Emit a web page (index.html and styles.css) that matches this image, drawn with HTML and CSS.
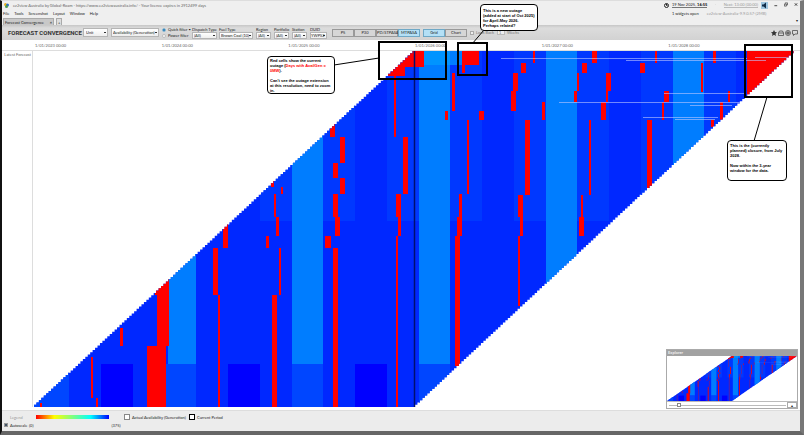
FILE: index.html
```html
<!DOCTYPE html>
<html lang="en">
<head>
<meta charset="utf-8">
<title>Forecast Convergence</title>
<link rel="stylesheet" href="styles.css">
</head>
<body>
<div class="window">
  <header class="head">
    <div class="titles">
      <div class="titlebar">
        <svg class="logo" viewBox="0 0 10 10"><circle cx="3" cy="3" r="3" fill="#e8b020"/><circle cx="7" cy="4" r="3" fill="#2b6fc4"/><circle cx="5" cy="7" r="3" fill="#4a9a50"/></svg>
        <span>ez2view Australia by Global-Roam - https://www.ez2viewaustralia.info/ - Your licence expires in 2912499 days</span>
      </div>
      <nav class="menu"><a href="#">File</a><a href="#">Tools</a><a href="#">Screenshot</a><a href="#">Layout</a><a href="#">Window</a><a href="#">Help</a></nav>
    </div>
    <div class="status">
      <svg class="clock" viewBox="0 0 10 10" fill="none" stroke="#222" stroke-width="2"><circle cx="5" cy="5" r="4"/><path d="M5 2v3h2"/></svg>
      <div class="status-text">
        <div class="status-row"><span class="now">19 Nov 2025, <b>16:55</b></span><svg class="pin" viewBox="0 0 6 10"><path d="M1 1h4v3H1zM2 4h1v5" fill="#333"/></svg><span class="next">Next: 13:00 (00:00)</span></div>
        <div class="status-row"><span>1 widgets open</span><span class="faint">ez2view-Australia-9.9.0.57-(2MB)</span></div>
      </div>
      <div class="wincontrols">
        <button aria-label="Sound" class="sound"><svg viewBox="0 0 14 14"><path d="M0 0h14v14H0z" fill="#9dc5df"/><path d="M2 5h3l5-4v12L5 9H2z" fill="#102c48"/></svg></button>
        <button aria-label="Minimise"><svg viewBox="0 0 10 10"><path d="M1 8h7" stroke="#222" stroke-width="2"/></svg></button>
        <button aria-label="Restore"><svg viewBox="0 0 10 10" fill="none" stroke="#222" stroke-width="1.5"><path d="M1 4h5v5H1zM3 3V1h6v5H7"/></svg></button>
        <button aria-label="Close"><svg viewBox="0 0 10 10"><path d="M2 2l6 6M8 2l-6 6" stroke="#222" stroke-width="2"/></svg></button>
      </div>
    </div>
  </header>
  <div class="tabs"><button class="tab active"><span>Forecast Convergence</span><b>×</b></button><button class="tab">+</button><span class="tabs-more">▾</span></div>
  <div class="toolbar">
    <h1>FORECAST CONVERGENCE</h1>
    <select class="big unit" aria-label="Level"><option>Unit</option></select>
    <select class="big measure" aria-label="Measure"><option>Availability (Generation)</option></select>
    <div class="radios">
      <label><input type="radio" name="filter" checked>Quick filter •</label>
      <label><input type="radio" name="filter">Power filter</label>
    </div>
    <div class="filters">
      <label class="field dispatch">Dispatch Type<select><option>(All)</option></select></label>
      <label class="field fuel">Fuel Type<select><option>Brown Coal (10)</option></select></label>
      <label class="field">Region<select><option>(All)</option></select></label>
      <label class="field">Portfolio<select><option>(All)</option></select></label>
      <label class="field">Station<select><option>(All)</option></select></label>
      <label class="field duid">DUID<select><option>YWPS2</option></select></label>
    </div>
    <div class="segments"><button>P5</button><button>P30</button><button>PD/STPASA</button><button class="on">MTPASA</button></div>
    <div class="segments"><button class="on">Grid</button><button>Chart</button></div>
    <label class="lookback"><input type="checkbox">Look Back</label>
    <label class="lookback"><input type="text" value="1" class="weeks">Weeks</label>
    <div class="tools">
      <button aria-label="Favourite"><svg viewBox="0 0 12 12"><path d="M6 0l2 4 4 .5-3 3L10 12 6 9.500 2 12l1-4.500-3-3L4 4z"/></svg></button>
      <button aria-label="Copy"><svg viewBox="0 0 12 12" fill="none" stroke="#444" stroke-width="1.500"><path d="M1 11V6l2-4h6l2 4v5zM1 6h10"/></svg></button>
      <button aria-label="Print"><svg viewBox="0 0 12 12" fill="none" stroke="#444" stroke-width="1.500"><circle cx="6" cy="6" r="5"/><path d="M3 6h6M4 4h4v4H4z"/></svg></button>
      <button aria-label="Comment"><svg viewBox="0 0 12 12" fill="none" stroke="#444" stroke-width="1.500"><path d="M1 1h10v7H6l-3 3V8H1z"/></svg></button>
    </div>
  </div>
  <main class="chart">
    <div class="axis"><span>1/01/2023 00:00</span><span>1/01/2024 00:00</span><span>1/01/2025 00:00</span><span>1/01/2026 00:00</span><span>1/01/2027 00:00</span><span>1/01/2028 00:00</span></div>
    <div class="plot">
      <div class="ylabel">Latest Forecast</div>
      <svg class="heat" viewBox="33 51 762 356" preserveAspectRatio="none" role="img" aria-label="Availability by forecast and period">
        <defs><clipPath id="band"><polygon id="stairs"/></clipPath></defs>
        <g id="cells" clip-path="url(#band)"></g>
      </svg>
    </div>
    <section class="explorer">
      <h2>Explorer</h2>
      <svg class="mini" viewBox="33 51 762 356" preserveAspectRatio="none"><use href="#cells"/></svg>
      <div class="zoombar"><input type="range" min="0" max="100" value="7" aria-label="Zoom"><button aria-label="Collapse">▴</button></div>
    </section>
  </main>
  <footer class="legend">
    <div class="legend-row"><span class="legend-title">Legend</span><i class="ramp"></i><span class="key"><i class="box"></i>Actual Availability (Generation)</span><span class="key"><i class="box dark"></i>Current Period</span></div>
    <div class="legend-row scale"><label><input type="checkbox" checked>Autoscale</label><span class="low">(0)</span><span class="high">(375)</span></div>
  </footer>
  <svg class="marks" viewBox="0 0 804 435" preserveAspectRatio="none" fill="none" stroke="#000">
    <path d="M414.500 51V407" stroke="#001070" stroke-width="1.500"/>
    <path d="M334 65L379 58M472 44L484 30M767 97L754 141"/>
    <path d="M379 42h67v37h-67zM458 43h29v32h-29zM745 45h47v52h-47z" stroke-width="2"/>
  </svg>
  <aside class="callout current">Red cells show the current<br>outage (<em>Days with AvailGen =<br>0MW</em>).<br><br>Can't see the outage extension<br>at this resolution, need to zoom<br>in.</aside>
  <aside class="callout fresh">This is a new outage<br>(added at start of Oct 2025)<br>for April-May 2026.<br>Perhaps related?</aside>
  <aside class="callout closure">This is the (currently<br>planned) closure, from July<br>2028.<br><br>Now within the 3-year<br>window for the data.</aside>
</div>
<script src="heatmap.js"></script>
</body>
</html>
```
FILE: styles.css
```css
* { box-sizing: border-box; }
body { margin: 0; background: #fff; font: 4px/5px Lato, "Noto Sans", sans-serif; color: #222; }
button, select, input { font: inherit; color: inherit; margin: 0; padding: 0; }
button { border: 0; background: none; }
svg { display: block; }
a { color: inherit; text-decoration: none; }

.window { position: relative; min-height: 100vh; display: flex; flex-direction: column; border: solid; border-width: 1px 4px 4px 2px; border-color: #ddd #777 #666 #111; background: #fff; }
.head { display: flex; justify-content: space-between; height: 17px; background: #efefef; }
.titlebar { display: flex; align-items: center; gap: 4px; height: 9px; padding-left: 2px; color: #666; }
.logo { width: 5px; height: 5px; }
.menu { display: flex; gap: 5px; padding: 1px 1px; }
.status { display: flex; gap: 3px; padding: 1px 2px; }
.clock { width: 5px; height: 5px; margin-top: 1px; }
.status-text { width: 86px; white-space: nowrap; }
.status-row { display: flex; gap: 8px; height: 9px; }
.now { border-bottom: 1px solid #777; height: 6px; }
.now b { color: #000; }
.pin { width: 3px; height: 5px; }
.next { color: #999; border-bottom: 1px solid #bbb; height: 6px; }
.faint { color: #999; }
.wincontrols { display: flex; align-items: flex-start; gap: 6px; }
.wincontrols svg { width: 4px; height: 5px; }
.wincontrols .sound svg { width: 7px; height: 7px; }

.tabs { display: flex; gap: 2px; height: 7px; padding-left: 1px; background: #efefef; }
.tab { display: flex; justify-content: space-between; align-items: center; padding: 0 1px; border: 1px solid #aaa; border-bottom: 0; background: #ddd; }
.tab.active { width: 51px; background: #c8c8c8; }
.tabs-more { margin-left: auto; padding-right: 2px; }

.toolbar { display: flex; align-items: center; gap: 3px; height: 15px; padding: 0 2px 0 6px; background: linear-gradient(#c6c6c6, #dcdcdc 20%, #d2d2d2); white-space: nowrap; }
h1 { margin: 0; width: 72px; font: bold 6px/8px Roboto, "Noto Sans", sans-serif; color: #333; }
select { appearance: none; height: 7px; padding-left: 2px; border: 1px solid #b5b5b5; border-radius: 0; background: linear-gradient(#333, #333) right 1px center / 2px 1px no-repeat, linear-gradient(#fff, #eee); }
.big { height: 9px; }
.unit { width: 25px; }
.measure { width: 48px; padding-left: 1px; }
.radios { display: grid; gap: 1px; width: 27px; }
.radios label { display: flex; align-items: center; gap: 2px; }
.radios input { appearance: none; width: 4px; height: 4px; border: 1px solid #bbb; border-radius: 50%; background: #fff; }
.radios input:checked { background: #1878b8; border-color: #90b8d0; }
.filters { display: flex; gap: 3px; }
.field { display: grid; width: 15px; }
.field select { width: 100%; padding-left: 1px; }
.field.dispatch { width: 24px; }
.field.fuel { width: 34px; }
.field.duid { width: 17px; }
.duid select { padding-left: 0; }
.segments { display: flex; }
.segments button { width: 22px; height: 8px; border: 1px solid #999; background: #d6d6d6; }
.segments .on { background: #b4e0f6; border-color: #6fa8c6; }
.filters + .segments { margin-left: 2px; }
.lookback { display: flex; align-items: center; gap: 2px; color: #777; }
.lookback [type=checkbox] { appearance: none; width: 4px; height: 4px; border: 1px solid #aaa; background: #eee; }
.weeks { width: 8px; height: 5px; padding-left: 1px; border: 1px solid #bbb; background: #eee; }
.tools { display: flex; gap: 1px; margin-left: auto; }
.tools svg { width: 6px; height: 6px; fill: none; }
.tools button:first-child svg { fill: #333; }

.chart { position: relative; flex: 1; display: flex; flex-direction: column; padding-bottom: 3px; }
.axis { display: grid; grid-template-columns: repeat(6, 1fr); height: 11px; padding: 3px 5px 0 33px; border-bottom: 1px solid #ddd; color: #666; }
.plot { flex: 1; display: flex; padding-right: 5px; }
.ylabel { width: 31px; flex: none; padding: 1px 1px 0 0; text-align: right; border-right: 1px solid #ddd; color: #666; white-space: nowrap; }
.heat { flex: 1; width: 100%; min-width: 0; height: auto; }

.explorer { position: absolute; right: 2px; bottom: 1px; width: 132px; border: 1px solid #aaa; background: #fff; }
h2 { margin: 0; padding-left: 1px; font: bold 4px/6px Lato, "Noto Sans", sans-serif; color: #eee; background: #a2a2a2; }
.mini { width: 100%; height: 45px; }
.zoombar { display: flex; align-items: center; gap: 1px; height: 7px; border-top: 1px solid #bbb; }
.zoombar input { appearance: none; flex: 1; min-width: 0; height: 6px; margin-left: 2px; background: linear-gradient(#bbb, #bbb) center / 100% 1px no-repeat; }
.zoombar input::-webkit-slider-thumb { appearance: none; width: 4px; height: 4px; border: 1px solid #888; background: #fff; }
.zoombar button { width: 10px; height: 6px; border: 1px solid #aaa; }

.legend { height: 21px; padding-top: 2px; border-top: 1px solid #ddd; background: #ececec; }
.legend-row { display: flex; align-items: center; height: 8px; padding-left: 8px; }
.legend-title { width: 26px; color: #999; }
.ramp { width: 73px; height: 4px; margin-right: 15px; background: linear-gradient(90deg, #f00, #ff0 25%, #7fff7f 50%, #0ff 75%, #00f); }
.key { display: flex; align-items: center; gap: 2px; width: 65px; white-space: nowrap; }
.box { width: 6px; height: 6px; border: 1px solid #888; background: #fff; }
.box.dark { border-color: #000; }
.scale { padding-left: 2px; }
.scale label { display: flex; align-items: center; gap: 2px; width: 25px; }
.scale input { appearance: none; width: 4px; height: 4px; border: 1px solid #999; background: #456; }
.high { margin-left: 78px; }

.marks { position: absolute; top: -1px; left: -2px; width: calc(100% + 6px); height: calc(100% + 5px); pointer-events: none; }
.callout { position: absolute; border: 1px solid #000; border-radius: 4px; padding: 1px 2px; background: #fff; color: #000; font: bold 4px/5px "Liberation Sans", "Noto Sans", sans-serif; white-space: nowrap; }
.callout em { font-style: normal; color: #f00; }
.current { left: 265px; top: 55px; width: 68px; height: 38px; }
.fresh { left: 478px; top: 3px; width: 58px; height: 27px; padding-top: 3px; }
.closure { left: 725px; top: 139px; width: 60px; height: 41px; padding-top: 2px; }
```
FILE: heatmap.js
```js
const LEFT = 33, TOP = 51, SPAN = 381, HEIGHT = 356, WEEKS = 156;
const cells = document.getElementById('cells');

function rect(x, y, w, h, fill) {
  const r = document.createElementNS('http://www.w3.org/2000/svg', 'rect');
  Object.entries({ x, y, width: w, height: h, fill }).forEach(([k, v]) => r.setAttribute(k, v));
  cells.appendChild(r);
}

// Each older forecast starts one week earlier, which steps both edges.
const left = [], right = [];
for (let i = 0; i < WEEKS; i++) {
  const x = LEFT + SPAN - (i + 1) * SPAN / WEEKS + 1;
  const y1 = TOP + i * HEIGHT / WEEKS, y2 = TOP + (i + 1) * HEIGHT / WEEKS;
  left.push(`${x},${y1}`, `${x},${y2}`);
  right.push(`${x + SPAN},${y1}`, `${x + SPAN},${y2}`);
}
document.getElementById('stairs').setAttribute('points', [...left, ...right.reverse()].join(' '));

rect(33, 51, 762, 356, '#0028ff');
[260, 323, 387, 450, 514, 577, 641, 704].forEach(x => rect(x, 51, 32, 170, '#0038ff'));
[[168, 28], [292, 31], [419, 31], [546, 31], [673, 31]].forEach(([x, w]) => rect(x, 51, w, 313, '#007dff'));
[[33, 36], [166, 30], [292, 31], [419, 31]].forEach(([x, w]) => rect(x, 364, w, 43, '#0046ff'));
[101, 228, 355].forEach(x => rect(x, 364, 32, 43, '#0000ff'));
rect(424, 51, 26, 14, '#0094ff');
rect(450, 51, 12, 14, '#007dff');

// Outage blocks: x, y, width, height.
[
  [40,403,2,4],[91,357,2,41],[96,398,2,9],[120,328,3,18],[147,346,19,61],[157,270,12,76],[155,285,2,10],
  [223,223,5,25],[213,248,5,47],[218,295,2,112],
  [271,179,3,8],[281,187,2,7],[274,194,2,23],[276,217,3,19],[266,236,3,12],[279,248,2,47],[272,295,5,112],
  [330,123,5,14],[340,137,5,26],[333,163,5,15],[340,178,5,16],[333,194,5,23],[335,217,5,19],[325,236,6,12],[333,248,5,159],
  [380,51,44,16],[380,67,25,9],[394,76,2,61],[403,137,5,57],[396,194,5,23],[398,217,3,19],[396,236,2,171],
  [462,51,17,14],[462,65,3,8],[452,73,3,38],[445,111,3,9],[479,111,5,9],[467,120,2,74],[459,194,3,23],[457,217,5,19],[455,236,5,130],
  [533,51,2,12],[521,63,5,10],[513,73,5,18],[511,91,5,20],[542,102,3,18],[525,120,5,75],[518,195,5,22],[520,217,3,19],[518,236,2,70],
  [592,51,5,12],[582,63,5,10],[577,73,2,18],[574,91,3,11],[606,73,5,18],[606,91,2,11],[601,102,5,18],[589,120,2,75],[581,195,2,22],[579,217,5,19],
  [640,63,5,10],[647,120,5,70],[655,51,2,12],[664,91,5,11],[662,102,2,18],
  [713,51,3,12],[701,63,2,29],[728,91,2,11],[720,102,3,18],[711,120,3,7],[747,51,49,48]
].forEach(b => rect(...b, '#ff0000'));

// Faint marker lines: x, y, length.
[[501,58,246],[626,60,140],[755,57,34],[559,102,184],[664,93,80],[690,105,42],[643,117,75],[675,119,40]]
  .forEach(([x, y, w]) => rect(x, y, w, 1, 'rgba(190,200,255,.6)'));
```
